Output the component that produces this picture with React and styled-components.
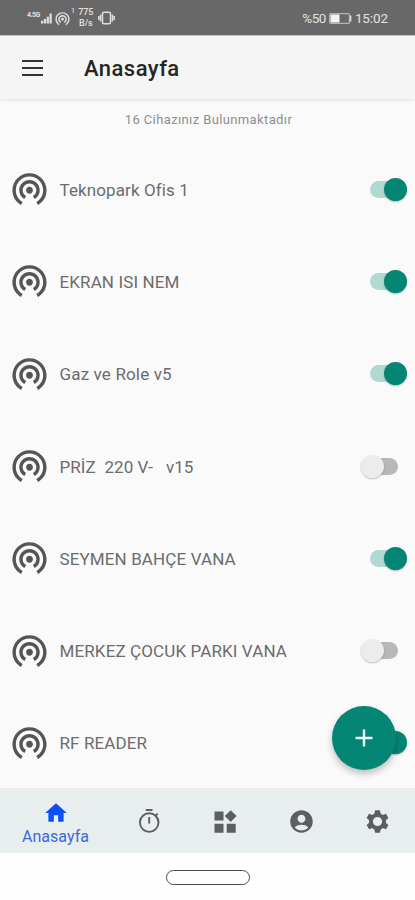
import styled, { createGlobalStyle, css } from "styled-components"
import {
    MdAccountCircle,
    MdHome,
    MdWifiTethering,
} from "react-icons/md"

const GlobalStyle = createGlobalStyle`
    * {
        box-sizing: border-box;
    }
    body {
        margin: 0;
        font-family: Roboto, "Liberation Sans", sans-serif;
        background-color: #fafafa;
    }
    button {
        padding: 0;
        border: none;
        background: none;
        font: inherit;
        color: inherit;
    }
    svg {
        display: block;
        flex: none;
    }
`

const Screen = styled.div`
    width: 415px;
    height: 900px;
    display: flex;
    flex-direction: column;
    overflow: hidden;
    background-color: #fafafa;
`

const StatusBar = styled.div`
    flex: none;
    height: 35px;
    display: flex;
    justify-content: space-between;
    align-items: center;
    padding: 1px 27px 0 27px;
    background-color: #686868;
    color: #e0e0e0;
`

const StatusGroup = styled.div`
    display: flex;
    align-items: center;
    gap: ${({gap}) => gap}px;
`

const StatusText = styled.span`
    font-size: 13.5px;
    line-height: 16px;
    letter-spacing: ${({spacing}) => spacing || 0}px;
`

const Network = styled.span`
    align-self: flex-start;
    margin-top: 4px;
    font-size: 7px;
    line-height: 8px;
    font-weight: 700;
    letter-spacing: -0.5px;
`

const Hotspot = styled.div`
    margin-left: 1px;
`

const HotspotCount = styled.span`
    align-self: flex-start;
    margin-left: -1px;
    margin-right: 2px;
    font-size: 8px;
    line-height: 8px;
`

const Speed = styled.div`
    display: flex;
    flex-direction: column;
    align-items: center;
    margin-right: 4px;
    font-size: 9px;
    line-height: 11px;
    font-weight: 500;
    letter-spacing: -0.1px;
`

const Header = styled.header`
    flex: none;
    z-index: 1;
    height: 64px;
    display: flex;
    align-items: center;
    padding-left: 22px;
    gap: 40px;
    border-top: 1px solid #c4c4c4;
    background-color: #f5f5f5;
    box-shadow: 0 1px 3px rgba(0, 0, 0, 0.11);
`

const MenuButton = styled.button`
    width: 21px;
    margin: 0 1px 0 0;
    display: flex;
    flex-direction: column;
    gap: 5px;
    span {
        height: 2px;
        background-color: #333;
    }
`

const Title = styled.h1`
    margin: 2px 0 0;
    font-size: 22px;
    line-height: 28px;
    font-weight: 500;
    letter-spacing: 0.45px;
    color: #252525;
`

const Content = styled.main`
    position: relative;
    flex: 1;
    min-height: 0;
    overflow: hidden;
`

const DeviceCount = styled.p`
    margin: 12px 0 16px;
    padding-left: 2px;
    font-size: 13px;
    line-height: 17px;
    letter-spacing: 0.38px;
    text-align: center;
    color: #8e8e8e;
`

const DeviceRow = styled.div`
    height: 92.3px;
    display: flex;
    align-items: center;
    padding: 0 8px 0 9px;
    color: #555;
    > svg {
        margin-top: -3px;
    }
`

const DeviceName = styled.span`
    flex: 1;
    margin: -1px 0 0 9.5px;
    font-size: 17px;
    line-height: 22px;
    letter-spacing: ${({spacing}) => spacing}px;
    white-space: pre;
    color: #6c6c6c;
`

const SwitchTrack = styled.button`
    width: 46px;
    height: 23px;
    display: flex;
    align-items: center;
    margin-top: -2px;
    ${({on}) => on && css`
        justify-content: flex-end;
    `};
    &::before {
        content: "";
        order: ${({on}) => on ? 0 : 1};
        width: 26px;
        height: 17px;
        margin: ${({on}) => on ? "0 -12px 0 0" : "0 0 0 -12px"};
        border-radius: 9px;
        background-color: ${({on}) => on ? "#b1d9d1" : "#b8b8b8"};
    }
`

const SwitchThumb = styled.span`
    z-index: 1;
    width: 23px;
    height: 23px;
    border-radius: 50%;
    background-color: ${({on}) => on ? "#058573" : "#ececec"};
    box-shadow: 0 1px 2px rgba(0, 0, 0, 0.24);
`

const AddButton = styled.button`
    position: absolute;
    z-index: 2;
    right: 19px;
    bottom: 18px;
    width: 64px;
    height: 64px;
    display: flex;
    justify-content: center;
    align-items: center;
    border-radius: 50%;
    background-color: #058573;
    box-shadow: 0 4px 7px rgba(0, 0, 0, 0.24);
`

const TabBar = styled.nav`
    flex: none;
    height: 65px;
    display: flex;
    background-color: #e8edee;
`

const Tab = styled.button`
    width: ${({active}) => active ? 111 : 76}px;
    display: flex;
    flex-direction: column;
    align-items: center;
    justify-content: center;
    padding-top: ${({active}) => active ? 5 : 1}px;
    color: ${({active}) => active ? "#0a50f5" : "#5c5f60"};
`

const TabLabel = styled.span`
    margin-top: 1px;
    font-size: 16px;
    line-height: 20px;
    letter-spacing: 0.05px;
    color: #3a6ae2;
`

const GestureBar = styled.div`
    flex: none;
    height: 47px;
    display: flex;
    justify-content: center;
    align-items: center;
    padding-top: 1px;
    background-color: #fefefe;
`

const GesturePill = styled.div`
    width: 84px;
    height: 15px;
    border: 1.5px solid #4a4a4a;
    border-radius: 8px;
`

const SignalIcon = () => (
    <svg width="11" height="12" viewBox="0 0 12 12" fill="currentColor">
        <path d="M0 9h2.4v3H0zM3.1 7h2.4v5H3.1zM6.2 4.5h2.4V12H6.2zM9.3 1h2.4v11H9.3z" />
    </svg>
)

const VibrateIcon = () => (
    <svg width="17" height="14" viewBox="0 0 17 14" fill="none" stroke="currentColor" strokeWidth="1.5">
        <rect x="4.5" y="1.2" width="8" height="11.6" rx="1.5" />
        <path d="M2.6 3.5v7M.8 5v4M14.4 3.5v7M16.2 5v4" />
    </svg>
)

const BatteryIcon = () => (
    <svg width="23" height="11" viewBox="0 0 23 11">
        <rect x="0.6" y="0.6" width="19.8" height="9.8" rx="1" fill="none" stroke="#b4b4b4" strokeWidth="1.2" />
        <rect x="1.5" y="1.5" width="9" height="8" fill="#f4f4f4" />
        <path d="M20.8 2.5h1.6v6h-1.6z" fill="#d8d8d8" />
    </svg>
)

const PlusIcon = () => (
    <svg width="18" height="18" viewBox="0 0 18 18" stroke="#e8fffb" strokeWidth="2.4">
        <path d="M9 .5v17M.5 9h17" />
    </svg>
)

const TimerIcon = () => (
    <svg width="27" height="27" viewBox="0 0 27 27" fill="none" stroke="currentColor" strokeWidth="1.9">
        <circle cx="13.2" cy="14.6" r="9.3" />
        <path d="M9.9 2h6.6M13.2 9v6.4M19.3 8l2.3-2.3" />
    </svg>
)

const WidgetsIcon = () => (
    <svg width="27" height="27" viewBox="0 0 27 27" fill="currentColor">
        <path d="M2.5 3.5h9v9h-9zM2.5 15.7h9v9h-9zM14.7 15.7h9v9h-9zM18.7 2.2l5.9 5.9-5.9 5.9-5.9-5.9z" />
    </svg>
)

const GearIcon = () => (
    <svg width="27" height="27" viewBox="-13.5 -13.5 27 27">
        <circle r="6.6" fill="none" stroke="currentColor" strokeWidth="4" />
        {[0, 60, 120, 180, 240, 300].map((angle) => (
            <path
                key={angle}
                d="M-2.4-11.2h4.8l.9 4.2h-6.6z"
                fill="currentColor"
                transform={`rotate(${angle})`}
            />
        ))}
    </svg>
)

const devices = [
    { name: "Teknopark Ofis 1", on: true, spacing: 0.1 },
    { name: "EKRAN ISI NEM", on: true, spacing: 0.12 },
    { name: "Gaz ve Role v5", on: true, spacing: 0.15 },
    { name: "PRİZ  220 V-   v15", on: false, spacing: 0.08 },
    { name: "SEYMEN BAHÇE VANA", on: true, spacing: 0.12 },
    { name: "MERKEZ ÇOCUK PARKI VANA", on: false, spacing: 0.12 },
    { name: "RF READER", on: true, spacing: 0.12 },
]

function Switch({on}) {
    return (
        <SwitchTrack on={on ? 1 : 0} role="switch" aria-checked={on}>
            <SwitchThumb on={on ? 1 : 0} />
        </SwitchTrack>
    )
}

export default function App() {
    return (
        <Screen>
            <GlobalStyle />
            <StatusBar>
                <StatusGroup gap={1}>
                    <Network>4.5G</Network>
                    <SignalIcon />
                    <Hotspot><MdWifiTethering size={17} /></Hotspot>
                    <HotspotCount>1</HotspotCount>
                    <Speed>
                        <span>775</span>
                        <span>B/s</span>
                    </Speed>
                    <VibrateIcon />
                </StatusGroup>
                <StatusGroup gap={3}>
                    <StatusText spacing={-0.5}>%50</StatusText>
                    <BatteryIcon />
                    <StatusText spacing={-0.1}>15:02</StatusText>
                </StatusGroup>
            </StatusBar>

            <Header>
                <MenuButton aria-label="Menü">
                    <span />
                    <span />
                    <span />
                </MenuButton>
                <Title>Anasayfa</Title>
            </Header>

            <Content>
                <DeviceCount>16 Cihazınız Bulunmaktadır</DeviceCount>
                {devices.map(({name, on, spacing}) => (
                    <DeviceRow key={name}>
                        <MdWifiTethering size={41} />
                        <DeviceName spacing={spacing}>{name}</DeviceName>
                        <Switch on={on} />
                    </DeviceRow>
                ))}
                <AddButton aria-label="Ekle">
                    <PlusIcon />
                </AddButton>
            </Content>

            <TabBar>
                <Tab active={1}>
                    <MdHome size={26} />
                    <TabLabel>Anasayfa</TabLabel>
                </Tab>
                <Tab><TimerIcon /></Tab>
                <Tab><WidgetsIcon /></Tab>
                <Tab><MdAccountCircle size={27} /></Tab>
                <Tab><GearIcon /></Tab>
            </TabBar>

            <GestureBar>
                <GesturePill />
            </GestureBar>
        </Screen>
    )
}
